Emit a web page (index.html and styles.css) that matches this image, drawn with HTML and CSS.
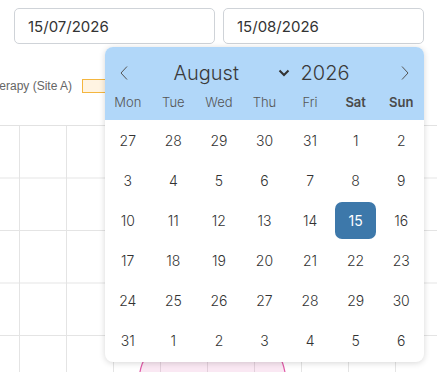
FILE: index.html
```html
<!DOCTYPE html>
<html lang="en">
<head>
    <meta charset="UTF-8">
    <meta name="viewport" content="width=device-width, initial-scale=1.0">
    <title>Sessions by Date</title>
    <link rel="stylesheet" href="styles.css">
</head>
<body>

<div class="page">
    <!-- Date range -->
    <div class="range">
        <input class="date-input" type="text" value="15/07/2026">
        <input class="date-input" type="text" value="15/08/2026">
    </div>

    <!-- Chart behind the picker -->
    <div class="chart">
        <div class="legend">
            <span class="legend-label">Physiotherapy (Site A)</span>
            <span class="legend-swatch"></span>
        </div>
        <div class="plot">
            <svg class="violin" width="180" height="40" viewBox="0 0 180 40">
                <path d="M12 40 C13 20 16 4 30 0 L145 0 C157 4 159 20 162 40 Z" fill="rgba(222, 92, 168, 0.14)"/>
                <path d="M12 40 C13 20 16 4 30 0 L145 0 C157 4 159 20 162 40" fill="none" stroke="#e05aa8" stroke-width="1.2"/>
            </svg>
        </div>
    </div>

    <!-- Date picker popup -->
    <div class="picker">
        <div class="picker-head">
            <div class="nav">
                <span class="arrow">
                    <svg width="8" height="14" viewBox="0 0 8 14"><path d="M7 0.5 L1 7 L7 13.5" fill="none" stroke="#555" stroke-width="1"/></svg>
                </span>
                <div class="month-year">
                    <span class="month">August</span>
                    <svg class="chev" width="12" height="8" viewBox="0 0 12 8"><path d="M1.5 1.5 L6 6 L10.5 1.5" fill="none" stroke="#333" stroke-width="2"/></svg>
                    <span class="year">2026</span>
                </div>
                <span class="arrow">
                    <svg width="8" height="14" viewBox="0 0 8 14"><path d="M1 0.5 L7 7 L1 13.5" fill="none" stroke="#555" stroke-width="1"/></svg>
                </span>
            </div>
            <div class="weekdays">
                <span>Mon</span><span>Tue</span><span>Wed</span><span>Thu</span><span>Fri</span>
                <span class="weekend">Sat</span><span class="weekend">Sun</span>
            </div>
        </div>
        <div class="days" id="days"></div>
    </div>
</div>

<script>
    // August 2026 starts on a Saturday, so the grid begins with Mon 27 July
    const days = document.getElementById('days');
    const cells = [27, 28, 29, 30, 31];
    for (let d = 1; d <= 31; d++) cells.push(d);
    for (let d = 1; d <= 6; d++) cells.push(d);

    cells.forEach((day, i) => {
        const cell = document.createElement('span');
        cell.className = 'day';
        if (i === 19) cell.classList.add('selected');
        cell.textContent = day;
        days.appendChild(cell);
    });
</script>
</body>
</html>
```

FILE: styles.css
```css
body {
    margin: 0;
    font-family: Inter, "Noto Sans", sans-serif;
    background: #fff;
    overflow: hidden;
}

.page {
    position: relative;
    height: 372px;
    overflow: hidden;
}

.range {
    display: flex;
    gap: 8px;
    padding: 8px 13px 0 14px;
}

.date-input {
    width: 201px;
    height: 36px;
    box-sizing: border-box;
    border: 1px solid #cfd3d8;
    border-radius: 5px;
    padding: 0 13px;
    font-family: Inter, sans-serif;
    font-size: 15px;
    color: #333;
    background: #fff;
}

.chart {
    margin-top: 27px;
}

.legend {
    display: flex;
    justify-content: flex-end;
    align-items: center;
    gap: 10px;
    width: 124px;
    height: 30px;
    overflow: hidden;
    white-space: nowrap;
}

.legend-label {
    font-family: "Liberation Sans", Arial, sans-serif;
    font-size: 12px;
    color: #666;
}

.legend-swatch {
    flex: none;
    width: 40px;
    height: 12px;
    background: #fff4e2;
    border: 1px solid #f4b63f;
}

.plot {
    position: relative;
    height: 260px;
    margin-top: 24px;
    border-top: 1px solid #e2e2e2;
    background-image:
        linear-gradient(to bottom, transparent 51.5px, #e4e4e4 51.5px, #e4e4e4 52.5px, transparent 52.5px),
        linear-gradient(to right, transparent 18.5px, #e4e4e4 18.5px, #e4e4e4 19.5px, transparent 19.5px);
    background-size: 100% 52.5px, 47px 100%;
}

.violin {
    position: absolute;
    left: 126px;
    top: 224px;
}

/* Picker */
.picker {
    position: absolute;
    left: 105px;
    top: 47px;
    width: 319px;
    height: 315px;
    background: #fff;
    border-radius: 8px;
    box-shadow: 0 1px 6px rgba(0, 0, 0, 0.16);
    overflow: hidden;
}

.picker-head {
    background: #b1d7f9;
    height: 73px;
}

.nav {
    display: flex;
    align-items: center;
    justify-content: space-between;
    padding: 12px 14px 0 14px;
    height: 28px;
}

.arrow {
    display: flex;
    width: 10px;
    justify-content: center;
}

.month-year {
    display: flex;
    align-items: center;
    padding-right: 6px;
}

.month {
    width: 104px;
    font-size: 20px;
    font-weight: 300;
    color: #3a3a3a;
}

.chev {
    margin: 0 11px 0 0;
}

.year {
    font-size: 20px;
    font-weight: 300;
    color: #3a3a3a;
}

.weekdays {
    display: grid;
    grid-template-columns: repeat(7, 1fr);
    margin-top: 7px;
    text-align: center;
    font-size: 13px;
    font-weight: 300;
    color: #555;
}

.weekend {
    font-weight: 600;
    color: #4a4a4a;
}

.days {
    display: grid;
    grid-template-columns: repeat(7, 1fr);
    grid-auto-rows: 40px;
    padding-top: 1px;
}

.day {
    display: flex;
    align-items: center;
    justify-content: center;
    margin: 1px 2px 2px;
    border-radius: 7px;
    font-size: 14px;
    font-weight: 300;
    color: #333;
}

.day.selected {
    background: #3d78aa;
    color: #fff;
    font-weight: 400;
}
```
